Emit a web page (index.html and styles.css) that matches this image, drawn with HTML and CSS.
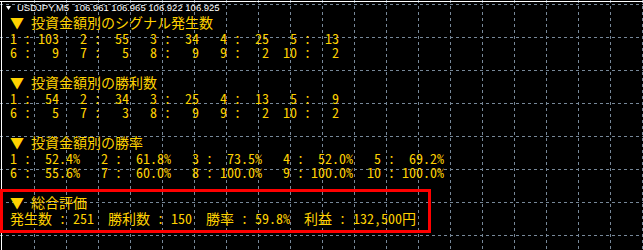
FILE: index.html
```html
<!DOCTYPE html>
<html lang="ja">
<head>
  <meta charset="UTF-8">
  <title>USDJPY,M5</title>
  <link rel="stylesheet" href="styles.css">
</head>
<body>
  <div class="chart">
    <svg class="grid" width="643" height="250" viewBox="0 0 643 250">
      <g class="dash">
        <line x1="34.5" y1="0" x2="34.5" y2="250"/>
        <line x1="66.5" y1="0" x2="66.5" y2="250"/>
        <line x1="98.5" y1="0" x2="98.5" y2="250"/>
        <line x1="130.5" y1="0" x2="130.5" y2="250"/>
        <line x1="162.5" y1="0" x2="162.5" y2="250"/>
        <line x1="194.5" y1="0" x2="194.5" y2="250"/>
        <line x1="226.5" y1="0" x2="226.5" y2="250"/>
        <line x1="258.5" y1="0" x2="258.5" y2="250"/>
        <line x1="290.5" y1="0" x2="290.5" y2="250"/>
        <line x1="322.5" y1="0" x2="322.5" y2="250"/>
        <line x1="354.5" y1="0" x2="354.5" y2="250"/>
        <line x1="386.5" y1="0" x2="386.5" y2="250"/>
        <line x1="418.5" y1="0" x2="418.5" y2="250"/>
        <line x1="450.5" y1="0" x2="450.5" y2="250"/>
        <line x1="482.5" y1="0" x2="482.5" y2="250"/>
        <line x1="514.5" y1="0" x2="514.5" y2="250"/>
        <line x1="546.5" y1="0" x2="546.5" y2="250"/>
        <line x1="578.5" y1="0" x2="578.5" y2="250"/>
        <line x1="610.5" y1="0" x2="610.5" y2="250"/>
        <line x1="642.5" y1="0" x2="642.5" y2="250"/>
        <line x1="0" y1="4.5" x2="643" y2="4.5"/>
        <line x1="0" y1="37.5" x2="643" y2="37.5"/>
        <line x1="0" y1="70.5" x2="643" y2="70.5"/>
        <line x1="0" y1="103.5" x2="643" y2="103.5"/>
        <line x1="0" y1="136.5" x2="643" y2="136.5"/>
        <line x1="0" y1="169.5" x2="643" y2="169.5"/>
        <line x1="0" y1="202.5" x2="643" y2="202.5"/>
        <line x1="0" y1="235.5" x2="643" y2="235.5"/>
      </g>
      <line class="frame" x1="0" y1="1.5" x2="643" y2="1.5"/>
      <line class="frame" x1="1.5" y1="1" x2="1.5" y2="250"/>
    </svg>

    <div class="header"><svg class="arrow" width="5" height="4" viewBox="0 0 5 4"><polygon points="0,0 5,0 2.5,4"/></svg><span class="quote">USDJPY,M5  106.961 106.965 106.922 106.925</span></div>

    <div class="section">
      <div class="title">▼ 投資金額別のシグナル発生数</div>
      <div class="row">1 : 103   2 :  55   3 :  34   4 :  25   5 :  13</div>
      <div class="row">6 :   9   7 :   5   8 :   9   9 :   2  10 :   2</div>
    </div>

    <div class="section">
      <div class="title">▼ 投資金額別の勝利数</div>
      <div class="row">1 :  54   2 :  34   3 :  25   4 :  13   5 :   9</div>
      <div class="row">6 :   5   7 :   3   8 :   9   9 :   2  10 :   2</div>
    </div>

    <div class="section">
      <div class="title">▼ 投資金額別の勝率</div>
      <div class="row">1 :  52.4%   2 :  61.8%   3 :  73.5%   4 :  52.0%   5 :  69.2%</div>
      <div class="row">6 :  55.6%   7 :  60.0%   8 : 100.0%   9 : 100.0%  10 : 100.0%</div>
    </div>

    <div class="section">
      <div class="title">▼ 総合評価</div>
      <div class="row">発生数 : 251  勝利数 : 150  勝率 : 59.8%  利益 : 132,500円</div>
    </div>

    <div class="mark"></div>
  </div>
</body>
</html>
```

FILE: styles.css
```css
body {
  margin: 0;
  background: #000;
  overflow: hidden;
}

.chart {
  position: relative;
  width: 643px;
  height: 250px;
  overflow: hidden;
  background: #000;
}

.grid {
  position: absolute;
  left: 0;
  top: 0;
}

.grid .dash line {
  stroke: #778899;
  stroke-width: 1;
  stroke-dasharray: 3 3;
}

.grid .frame {
  stroke: #fff;
  stroke-width: 1;
}

.header {
  position: relative;
  display: flex;
  align-items: center;
  height: 13px;
  padding: 3px 0 0 6px;
  box-sizing: border-box;
  font-family: "Liberation Sans", Arial, sans-serif;
  font-size: 9.5px;
  line-height: 10px;
  color: #fff;
}

.header .arrow {
  fill: #fff;
  margin-right: 6px;
  margin-top: -1px;
}

.header .quote {
  white-space: pre;
}

.section {
  position: relative;
  padding-left: 10px;
  margin-bottom: 14px;
  font-family: "Noto Sans Mono CJK JP", "Liberation Mono", "Noto Sans CJK JP", monospace;
  font-size: 14px;
  color: #ffd200;
}

.title {
  line-height: 18px;
  white-space: pre;
}

.row {
  line-height: 14px;
  white-space: pre;
}

.mark {
  position: absolute;
  left: 0;
  top: 189px;
  width: 425px;
  height: 38px;
  border: 3px solid #f00;
}
```
